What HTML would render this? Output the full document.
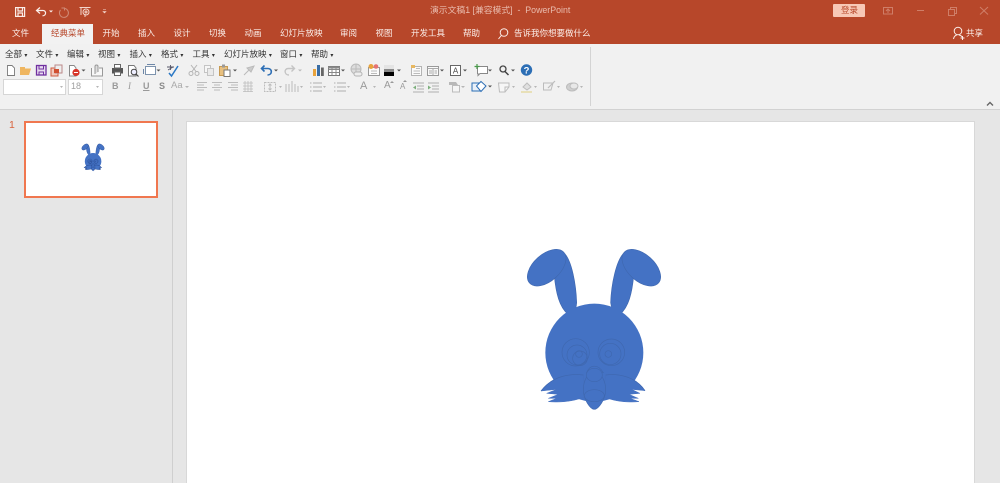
<!DOCTYPE html>
<html><head><meta charset="utf-8">
<style>
html,body{margin:0;padding:0;width:1000px;height:483px;overflow:hidden;background:#e6e6e6;font-family:"Liberation Sans","Noto Sans CJK SC",sans-serif}
.t{position:absolute;white-space:nowrap;font-size:8.5px;line-height:12px}
.w{color:#fbeee9}
.m{color:#333}
.m span{font-size:6px}
svg{position:absolute;left:0;top:0}
.d{position:absolute;left:0;top:0;width:1000px;height:483px;filter:blur(.35px)}
.bs{stroke:var(--s,#3f68b0);stroke-width:var(--w,2)}
.bw{stroke:var(--s,#4470bf);stroke-width:var(--w,1.5)}
</style></head><body>
<div class="d">
<div style="position:absolute;left:0;top:0;width:1000px;height:44px;background:#b7472a"></div>
<div style="position:absolute;left:42px;top:24px;width:51px;height:20px;background:#f2f2f2"></div>
<div style="position:absolute;left:0;top:44px;width:1000px;height:65px;background:#f1f1f1"></div>
<div style="position:absolute;left:0;top:109px;width:1000px;height:1px;background:#d2d2d2"></div>
<div style="position:absolute;left:590px;top:47px;width:1px;height:59px;background:#d4d4d4"></div>
<div style="position:absolute;left:172px;top:110px;width:1px;height:373px;background:#cfcfcf"></div>
<div style="position:absolute;left:187px;top:122px;width:787px;height:361px;background:#fff;box-shadow:0 0 0 1px #d8d8d8"></div>
<div style="position:absolute;left:24px;top:121px;width:130px;height:73px;background:#fff;border:2px solid #f0774f"></div>
<div class="t" style="left:9px;top:119px;font-size:10.5px;color:#d9623c">1</div>

<div class="t" style="left:430px;top:4px;color:#eabcae;font-size:8.8px">演示文稿1 [兼容模式] &nbsp;- &nbsp;PowerPoint</div>

<div class="t w" style="left:12px;top:27px">文件</div>
<div class="t" style="left:51px;top:27px;color:#b7472a">经典菜单</div>
<div class="t w" style="left:102.5px;top:27px">开始</div>
<div class="t w" style="left:138px;top:27px">插入</div>
<div class="t w" style="left:173.5px;top:27px">设计</div>
<div class="t w" style="left:209px;top:27px">切换</div>
<div class="t w" style="left:244.5px;top:27px">动画</div>
<div class="t w" style="left:280px;top:27px">幻灯片放映</div>
<div class="t w" style="left:340px;top:27px">审阅</div>
<div class="t w" style="left:375.5px;top:27px">视图</div>
<div class="t w" style="left:411px;top:27px">开发工具</div>
<div class="t w" style="left:463px;top:27px">帮助</div>
<div class="t w" style="left:514px;top:27px">告诉我你想要做什么</div>
<div class="t w" style="left:966px;top:27px">共享</div>

<div style="position:absolute;left:833px;top:4px;width:32px;height:13px;background:#f7c8b6;border-radius:1px"></div>
<div class="t" style="left:841px;top:4px;color:#b7472a">登录</div>

<div class="t m" style="left:5px;top:48px">全部 <span>▾</span></div>
<div class="t m" style="left:36px;top:48px">文件 <span>▾</span></div>
<div class="t m" style="left:67px;top:48px">编辑 <span>▾</span></div>
<div class="t m" style="left:98px;top:48px">视图 <span>▾</span></div>
<div class="t m" style="left:129.5px;top:48px">插入 <span>▾</span></div>
<div class="t m" style="left:161px;top:48px">格式 <span>▾</span></div>
<div class="t m" style="left:192.5px;top:48px">工具 <span>▾</span></div>
<div class="t m" style="left:224px;top:48px">幻灯片放映 <span>▾</span></div>
<div class="t m" style="left:280px;top:48px">窗口 <span>▾</span></div>
<div class="t m" style="left:311px;top:48px">帮助 <span>▾</span></div>

<div style="position:absolute;left:3px;top:79px;width:61px;height:14px;background:#fff;border:1px solid #d6d6d6"></div>
<div style="position:absolute;left:68px;top:79px;width:33px;height:14px;background:#fff;border:1px solid #d6d6d6"></div>
<div class="t" style="left:71px;top:80px;color:#a0a0a0;font-size:9px">18</div>
<div class="t" style="left:112px;top:80px;color:#9a9a9a;font-size:9px;font-weight:bold">B</div>
<div class="t" style="left:128px;top:80px;color:#9a9a9a;font-size:9px;font-style:italic;font-family:'Liberation Serif',serif">I</div>
<div class="t" style="left:143px;top:80px;color:#9a9a9a;font-size:9px;font-weight:bold;text-decoration:underline">U</div>
<div class="t" style="left:159px;top:80px;color:#8a8a8a;font-size:9px;font-weight:bold">S</div>
<div class="t" style="left:171px;top:80px;color:#aaa;font-size:9.5px">Aa</div>
<div class="t" style="left:360px;top:80px;color:#9a9a9a;font-size:11px">A</div>
<div class="t" style="left:384px;top:80px;color:#9a9a9a;font-size:10px">A</div>
<div class="t" style="left:400px;top:81px;color:#9a9a9a;font-size:8px">A</div>

<svg width="1000" height="483" viewBox="0 0 1000 483" fill="none">
<defs>
<symbol id="bunny" viewBox="0 0 480 540" overflow="visible">
<g fill="#4472c4">
<path class="bs" d="M118,108C123,160 133,200 158,222C172,226 183,215 185,188C183,130 170,65 150,42Z"/>
<ellipse class="bs" cx="95" cy="83" rx="69" ry="40" transform="rotate(-42 95 83)"/>
<path class="bs" d="M356,108C351,160 341,200 316,222C302,226 291,215 287,188C289,130 304,65 324,42Z"/>
<ellipse class="bs" cx="379" cy="83" rx="69" ry="40" transform="rotate(42 379 83)"/>
<circle cx="238" cy="338" r="147"/>
<g fill="none">
<circle class="bs" cx="182" cy="337" r="41"/><circle class="bs" cx="186" cy="345" r="30"/><circle class="bs" cx="195" cy="355" r="22"/><circle class="bs" cx="192" cy="342" r="10"/>
<circle class="bs" cx="289" cy="337" r="40"/><circle class="bs" cx="286" cy="342" r="32"/><circle class="bs" cx="280" cy="342" r="10"/>
</g>
<path class="bw" d="M205,405C160,400 110,410 78,453L125,448L95,460L130,463L100,475L125,475L100,485C160,490 200,475 210,470Z"/>
<path class="bw" d="M272,405C312,400 362,410 390,452L350,448L375,460L342,463L370,475L345,475L372,485C312,490 277,475 265,470Z"/>
<path class="bs" fill="none" d="M205,405C160,400 110,410 78,453M272,405C312,400 362,410 390,452"/>
<path class="bs" d="M205,450C205,420 220,395 238,395C256,395 272,420 272,450C272,478 250,508 238,508C226,508 205,478 205,450Z"/>
<path class="bs" d="M215,398C225,372 250,372 265,398Z"/>
<ellipse class="bs" cx="238" cy="405" rx="24" ry="20"/>
<ellipse class="bs" cx="238" cy="467" rx="30" ry="18"/>
</g>
</symbol>
</defs>

<use href="#bunny" x="515" y="240" width="160" height="180"/>
<use href="#bunny" x="79.7" y="142.3" width="27" height="30.4" style="--s:#2b4f96;--w:7"/>

<!-- QAT -->
<g stroke="#fbeee9" stroke-width="1.2">
<rect x="15.6" y="7.6" width="9" height="8.8"/><path d="M18,8V11H22.5V8M18,16.4V13H22.5V16.4"/>
<path d="M40,7.5L36.5,10.5L40,13.5M37,10.5H43C46.5,10.5 46.5,15.8 42.5,15.8"/>
</g>
<path d="M49,10.5H53L51,12.5Z" fill="#fbeee9"/>
<path d="M64,8.4A4.5,4.5 0 1 1 60.5,10M61.5,8H64.5V10.5" stroke="#cf8a76"/>
<g stroke="#f3d6cc" stroke-width="1"><path d="M79.5,7.5H90.5M81,7.5V15M85,17V14"/><circle cx="86" cy="12" r="3"/><circle cx="86" cy="12" r="1"/></g>
<path d="M103,9.5H106M103,11.5H106L104.5,13Z" fill="#f3d6cc" stroke="#f3d6cc" stroke-width=".6"/>

<!-- title right -->
<g stroke="#cf7e68" stroke-width="1">
<rect x="883.5" y="7.5" width="9" height="6.5"/><path d="M888,13V9.5M886,11L888,9L890,11"/>
<path d="M917,10.5H924"/>
<rect x="948.5" y="9.5" width="6" height="6"/><path d="M950.5,9.5V7.5H956.5V13.5H954.5"/>
<path d="M980,7L988,14.5M988,7L980,14.5"/>
</g>
<g stroke="#fbeee9" stroke-width="1"><circle cx="958" cy="31" r="3.8"/><path d="M953.5,39C954,36 956,35 957,35M959,35C961,35.5 962,36 962.5,37.5M960.5,38H964.5M962.5,36V40"/></g>
<g stroke="#fbeee9" stroke-width="1"><circle cx="504" cy="32.5" r="3.8"/><path d="M501.3,35.5L498.5,39"/></g>

<!-- Row 2 -->
<path d="M7.5,65.5H12L14.5,68V75.5H7.5Z" fill="#fff" stroke="#7b7b7b" stroke-width=".9"/>
<path d="M20,67H25V68.5H31L29,75H20Z" fill="#efb660"/>
<rect x="36.5" y="65.5" width="9.5" height="9.5" stroke="#7030a0" stroke-width="1.3" fill="#e8dcf0"/><path d="M39,65.5V69H43.5V65.5M39,75V72H43.5V75" stroke="#7030a0"/>
<rect x="51" y="68" width="7" height="8" fill="#f2c9bd" stroke="#cf5c3f"/><rect x="55" y="65" width="7" height="8" fill="#eeeeee" stroke="#b88"/><rect x="54" y="69" width="5" height="4" fill="#d04f30"/>
<path d="M69.5,65.5H74L76,68V76H69.5Z" fill="#fff" stroke="#888"/><circle cx="76" cy="72.5" r="3.6" fill="#d8362a"/><path d="M74,72.5H78" stroke="#fff"/>
<path d="M91.5,68V76H102.5V68H99" stroke="#999" fill="#f8f8f8"/><path d="M95,74V66.5C95,64.5 98,64.5 98,66.5V72" stroke="#999" fill="#ddd"/>
<rect x="112" y="68" width="11" height="5.5" fill="#555"/><rect x="114.5" y="64.5" width="6" height="3.5" fill="#fff" stroke="#666"/><rect x="114.5" y="72" width="6" height="3.5" fill="#fff" stroke="#666"/>
<path d="M128.5,65.5H134L136,68V76H128.5Z" stroke="#777" fill="#fff"/><circle cx="134" cy="72" r="2.8" stroke="#444" fill="#eef"/><path d="M136,74L138.5,76.5" stroke="#444" stroke-width="1.2"/>
<rect x="145.5" y="66.5" width="10" height="8" stroke="#7d93ad" fill="#fff"/><path d="M143.5,69V74M147,64.5H155" stroke="#6d87a8"/>
<path d="M167,67H174M170.5,65V70M168,70L173,67" stroke="#556" stroke-width=".9"/><path d="M169,73L171.5,76L178,66" stroke="#2a78c5" stroke-width="1.5"/>
<g stroke="#b4b4b4"><circle cx="191" cy="73.5" r="2"/><circle cx="197" cy="73.5" r="2"/><path d="M192,71.5L197,65M196,71.5L191,65"/></g>
<rect x="204.5" y="65.5" width="6" height="7" stroke="#c4c4c4" fill="#f6f6f6"/><rect x="207.5" y="68.5" width="6" height="7" stroke="#c4c4c4" fill="#eaeaea"/>
<rect x="219.5" y="66.5" width="8" height="9" fill="#e8c07f" stroke="#c79a52"/><rect x="222" y="64.5" width="3" height="3" fill="#999"/><rect x="224" y="70" width="6" height="6.5" fill="#fff" stroke="#777"/>
<path d="M244,75L249,70M247,68L251,72L254,66Z" stroke="#bbb" fill="#ccc"/>
<path d="M264.5,65.5L261.5,68.5L264.5,71.5M262,68.5H268C272.5,68.5 272.5,75 267.5,75" stroke="#2c6eb5" stroke-width="1.6"/>
<path d="M291.5,65.5L294.5,68.5L291.5,71.5M294,68.5H288C284,68.5 284,75 289,75" stroke="#c4c4c4" stroke-width="1.4"/>
<rect x="313" y="69" width="3" height="7" fill="#e8a33d"/><rect x="317" y="65" width="3" height="11" fill="#3a6ea5"/><rect x="321" y="67.5" width="2.8" height="8.5" fill="#666"/>
<rect x="328.5" y="66.5" width="11" height="9" stroke="#777" fill="#fff"/><path d="M328.5,69.5H339.5M328.5,72.5H339.5M332,66.5V75.5M336,66.5V75.5" stroke="#888"/><path d="M328,66.5H340V68.5H328Z" fill="#888"/>
<circle cx="356" cy="69" r="5" stroke="#bbb" fill="#ddd"/><path d="M351,69H361M356,64V74" stroke="#bbb"/><rect x="354" y="72" width="8" height="4" rx="2" stroke="#b4b4b4" fill="#eee"/>
<rect x="368.5" y="67.5" width="11" height="8" stroke="#999" fill="#fbfbfb"/><circle cx="371" cy="66.5" r="2.5" fill="#e8a33d"/><circle cx="376" cy="66.5" r="2.3" fill="#e57373"/><path d="M371,71H377M371,73.5H377" stroke="#bbb"/>
<rect x="384" y="65" width="10" height="4" fill="#e4e4e4"/><rect x="384" y="69" width="10" height="3" fill="#888"/><rect x="384" y="72" width="10" height="4" fill="#000"/>
<rect x="411.5" y="66.5" width="10" height="9" stroke="#b4b4b4" fill="#fafafa"/><path d="M411,65H415V68H411Z" fill="#e8b860"/><path d="M416,68.5H420M413.5,71H420M413.5,73.5H420" stroke="#bbb"/>
<rect x="427.5" y="66.5" width="11" height="9" stroke="#999" fill="#fafafa"/><path d="M427.5,68.5H438.5M433,68.5V75.5M429,71H432M429,73H432M434.5,71H437M434.5,73H437" stroke="#aaa"/>
<rect x="450.5" y="65.5" width="10" height="10" stroke="#666" fill="#fff"/>
<text x="455.5" y="73.5" text-anchor="middle" font-size="8" fill="#444" font-family="Liberation Sans">A</text>
<path d="M477.5,66.5H487.5V73.5H480L478,75.5V73.5H477.5Z" stroke="#888" fill="#fff"/><path d="M477,64V69M474.5,66.5H479.5" stroke="#4a9a4a" stroke-width="1.2"/>
<circle cx="503" cy="69" r="3" stroke="#444" stroke-width="1.3"/><path d="M505,71.5L508.5,75" stroke="#444" stroke-width="1.5"/>
<circle cx="526.5" cy="70" r="5.7" fill="#2c6eb5"/>
<text x="526.5" y="73.5" text-anchor="middle" font-size="9.5" font-weight="bold" fill="#fff" font-family="Liberation Sans">?</text>

<g fill="#555">
<path d="M81.5,69.5H85.5L83.5,71.5Z"/><path d="M156.5,69.5H160.5L158.5,71.5Z"/><path d="M233,69.5H237L235,71.5Z"/><path d="M274,69.5H278L276,71.5Z"/><path d="M341,69.5H345L343,71.5Z"/><path d="M397,69.5H401L399,71.5Z"/><path d="M440,69.5H444L442,71.5Z"/><path d="M463,69.5H467L465,71.5Z"/><path d="M488,69.5H492L490,71.5Z"/><path d="M511,69.5H515L513,71.5Z"/>
</g>
<path d="M298,69.5H302L300,71.5Z" fill="#bbb"/>

<!-- Row 3 -->
<g stroke="#bcbcbc" stroke-width="1">
<path d="M197,82.5H207M197,85H204M197,87.5H207M197,90H204"/>
<path d="M212,82.5H222M214,85H220M212,87.5H222M214,90H220"/>
<path d="M228,82.5H238M231,85H238M228,87.5H238M231,90H238"/>
<path d="M243,83H253M243,86H253M243,89H253M243,91.5H253M245,81V92M251,81V92M248,81V92" stroke-width=".8"/>
<rect x="264.5" y="82.5" width="11" height="9" stroke-dasharray="2 1"/><path d="M270,84V90M268.5,85.5L270,84L271.5,85.5M268.5,88.5L270,90L271.5,88.5"/>
<path d="M286,84V92M289,84V92M292,81V92M295,84V92M298,86V92" stroke-width="1"/>
<path d="M313,83H322M313,87H322M313,91H322M310,83H311.5M310,87H311.5M310,91H311.5" stroke="#b0b0b0"/>
<path d="M337,83H346M337,87H346M337,91H346M334,83H335.5M334,87H335.5M334,91H335.5" stroke="#b0b0b0"/>
<path d="M413,83H424M417,86H424M417,89H424M413,92H424" stroke="#b0b0b0"/>
<path d="M428,83H439M432,86H439M432,89H439M428,92H439" stroke="#b0b0b0"/>
<path d="M413,87.5L416,85.5V89.5Z M428,85.5L431,87.5L428,89.5Z" fill="#7db07d" stroke="none"/>
<rect x="452.5" y="85.5" width="7" height="6.5" fill="#f5f5f5"/><path d="M449,82H456L458,85H449Z" fill="#b8b8b8" stroke="none"/>
<path d="M498.5,83H509V87L505,92H499.5Z" fill="#f6f6f6"/><path d="M505,92V87H509"/>
<path d="M521,92H532" stroke="#e0d080"/><path d="M523,87L527,83L531,87L527,90Z" fill="#e0e0e0"/>
<path d="M543.5,83H553L551,90H543.5Z"/><path d="M548,88L555,81" stroke-width="1.2"/>
<ellipse cx="572" cy="87" rx="5.5" ry="4" fill="#cfcfcf"/><ellipse cx="574" cy="86" rx="4" ry="3" fill="#e8e8e8"/>
</g>
<rect x="472" y="83" width="8" height="8" stroke="#2c6eb5" fill="#e9f0f8"/><path d="M481,81.5L486,86L481,91.5L476.5,86Z" stroke="#2c6eb5" fill="#fff"/>
<g fill="#b6b6b6">
<path d="M60,86H63L61.5,88Z"/><path d="M96,86H99L97.5,88Z"/>
<path d="M185,86H189L187,88Z"/><path d="M279,86H282L280.5,88Z"/><path d="M300,86H303L301.5,88Z"/><path d="M323,86H326L324.5,88Z"/><path d="M347,86H350L348.5,88Z"/><path d="M373,86H376L374.5,88Z"/><path d="M461,86H465L463,88Z"/><path d="M512,86H515L513.5,88Z"/><path d="M534,86H537L535.5,88Z"/><path d="M557,86H560L558.5,88Z"/><path d="M580,86H583L581.5,88Z"/>
</g>
<path d="M488,85.5H492L490,87.5Z" fill="#555"/>
<path d="M392,81L394,83H390Z M405,80L407,82H403Z" fill="#999"/>
<path d="M987,105.5L990,102.5L993,105.5" stroke="#666" stroke-width="1.4"/>
</svg>
</div>
</body></html>
